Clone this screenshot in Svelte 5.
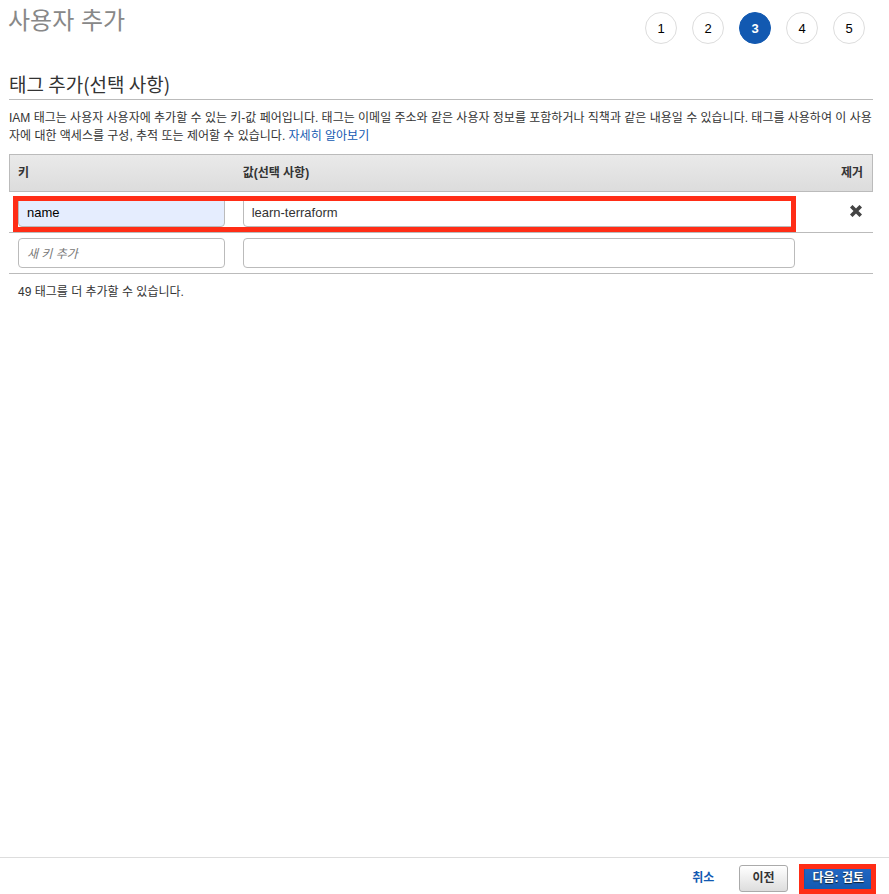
<script>
  const steps = [1, 2, 3, 4, 5];
  const current = 3;
  let tagKey = $state('name');
  let tagValue = $state('learn-terraform');
  let newKey = $state('');
  let newValue = $state('');
</script>

<div class="page">
  <header>
    <h1>사용자 추가</h1>
    <ol class="steps">
      {#each steps as step}
        <li class:active={step === current} aria-current={step === current ? 'step' : undefined}>{step}</li>
      {/each}
    </ol>
  </header>

  <main>
    <h2>태그 추가(선택 사항)</h2>
    <p class="intro">
      IAM 태그는 사용자 사용자에 추가할 수 있는 키-값 페어입니다. 태그는 이메일 주소와 같은 사용자 정보를 포함하거나 직책과 같은 내용일 수 있습니다. 태그를 사용하여 이 사용자에 대한 액세스를 구성, 추적 또는 제어할 수 있습니다. <a href="#learn">자세히 알아보기</a>
    </p>

    <table>
      <thead>
        <tr>
          <th class="key" scope="col">키</th>
          <th class="value" scope="col">값(선택 사항)</th>
          <th class="remove" scope="col">제거</th>
        </tr>
      </thead>
      <tbody>
        <tr class="marked">
          <td>
            <input class="filled" type="text" aria-label="키" bind:value={tagKey} />
            <span class="row-mark"></span>
          </td>
          <td><input type="text" aria-label="값(선택 사항)" bind:value={tagValue} /></td>
          <td class="remove">
            <button class="delete" type="button" aria-label="제거">
              <svg viewBox="0 0 12 12" width="12" height="12" aria-hidden="true">
                <path d="M2.5 2.5 9.5 9.5M9.5 2.5 2.5 9.5" stroke="#444" stroke-width="3.6" stroke-linecap="square" />
              </svg>
            </button>
          </td>
        </tr>
        <tr>
          <td><input type="text" aria-label="새 키" placeholder="새 키 추가" bind:value={newKey} /></td>
          <td><input type="text" aria-label="새 값" bind:value={newValue} /></td>
          <td></td>
        </tr>
      </tbody>
    </table>
    <p class="remaining">49 태그를 더 추가할 수 있습니다.</p>
  </main>

  <footer>
    <a class="cancel" href="#cancel">취소</a>
    <button class="btn" type="button">이전</button>
    <div class="next">
      <button class="btn primary" type="button">다음: 검토</button>
      <span class="next-mark"></span>
    </div>
  </footer>
</div>

<style>
  :global(body) {
    margin: 0;
    background: #fff;
  }
  .page {
    box-sizing: border-box;
    min-height: 100vh;
    display: flex;
    flex-direction: column;
    font-family: 'Liberation Sans', 'Noto Sans CJK KR', sans-serif;
    font-size: 12px;
    line-height: 18px;
    color: #333;
  }
  header {
    display: flex;
    justify-content: space-between;
    padding: 5px 24px 8px 8px;
  }
  h1 {
    margin: 0;
    font-size: 24px;
    line-height: 32px;
    font-weight: 400;
    color: #888;
  }
  .steps {
    display: flex;
    gap: 15px;
    margin: 0;
    padding: 7px 0 12px;
    list-style: none;
    font-size: 13px;
    color: #000;
  }
  .steps li {
    box-sizing: border-box;
    width: 32px;
    height: 32px;
    border: 1px solid #ddd;
    border-radius: 50%;
    line-height: 32px;
    text-align: center;
  }
  .steps li.active {
    background: #1259b1;
    border-color: #1259b1;
    color: #fff;
    font-weight: 700;
  }
  main {
    flex: 1;
    padding: 0 16px 0 9px;
  }
  h2 {
    margin: 0 0 9px;
    padding: 6px 0 2px;
    border-bottom: 1px solid #bbb;
    font-family: 'Noto Sans CJK KR', 'Liberation Sans', sans-serif;
    font-size: 19px;
    line-height: 27px;
    font-weight: 400;
  }
  p {
    margin: 0;
  }
  a {
    color: #1259b1;
    text-decoration: none;
  }
  .intro {
    margin-bottom: 9px;
  }
  table {
    width: 100%;
    table-layout: fixed;
    border-collapse: separate;
    border-spacing: 0;
  }
  thead tr {
    background: linear-gradient(#eaeaea, #dcdcdc);
  }
  th {
    box-sizing: border-box;
    height: 38px;
    padding: 0 9px;
    border: solid #bbb;
    border-width: 1px 0;
    text-align: left;
    font-weight: 700;
  }
  th:first-child {
    border-left-width: 1px;
    padding-left: 8px;
  }
  th:last-child {
    border-right-width: 1px;
  }
  .key {
    width: 26%;
  }
  .value {
    width: 66%;
  }
  .remove {
    text-align: right;
  }
  td {
    box-sizing: border-box;
    height: 41px;
    padding: 0 9px;
    border-bottom: 1px solid #bbb;
  }
  td.remove {
    padding: 2px 11px 0 0;
  }
  .marked {
    position: relative;
  }
  input {
    display: block;
    box-sizing: border-box;
    width: 100%;
    height: 30px;
    padding: 0 8px;
    border: 1px solid #bbb;
    border-radius: 4px;
    background: #fff;
    color: #333;
    font-family: inherit;
    font-size: 13px;
  }
  input.filled {
    background: #e5edfe;
    color: #000;
  }
  input::placeholder {
    color: #777;
    font-size: 12px;
    font-style: italic;
  }
  .row-mark {
    position: absolute;
    inset: 4px calc(8% + 8px) 1px 4px;
    border: 5px solid #ff2d16;
    pointer-events: none;
  }
  .delete {
    display: inline-block;
    padding: 0;
    border: 0;
    background: none;
  }
  .delete svg {
    display: block;
  }
  .remaining {
    padding: 9px;
  }
  footer {
    display: flex;
    align-items: center;
    justify-content: flex-end;
    box-sizing: border-box;
    height: 37px;
    padding: 5px 16px 0 0;
    border-top: 1px solid #ddd;
  }
  .cancel {
    margin-right: 25px;
    padding-bottom: 2px;
    font-weight: 700;
  }
  .btn {
    box-sizing: border-box;
    height: 27px;
    padding: 0 12px 2px;
    border: 1px solid #aaa;
    border-radius: 3px;
    background: linear-gradient(#fff, #ddd);
    color: #333;
    font: inherit;
    font-weight: 700;
  }
  .next {
    position: relative;
    margin-left: 16px;
  }
  .btn.primary {
    display: block;
    padding: 0 8px 2px;
    border-color: #1259b1;
    background: linear-gradient(#2468c4, #1259b1);
    color: #fff;
    text-shadow: 0 1px 1px #123;
  }
  .next-mark {
    position: absolute;
    inset: -1px -3px -2px -5px;
    border: 5px solid #ff2d16;
    pointer-events: none;
  }
</style>
